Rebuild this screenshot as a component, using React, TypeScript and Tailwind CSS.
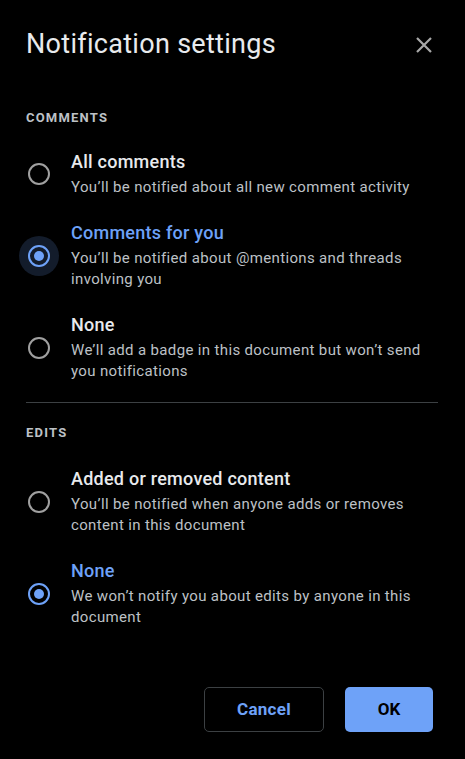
import React from "react";

type Opt = { title: string; sub: string; checked?: boolean; focus?: boolean };

function Radio({ checked, focus }: { checked?: boolean; focus?: boolean }) {
  return (
    <div className="relative w-[24px] h-[24px] shrink-0 flex items-center justify-center">
      {focus && <div className="absolute left-[-8px] top-[-8px] w-[40px] h-[40px] rounded-full bg-[#131c2b]" />}
      <div
        className={
          checked
            ? "relative w-[22px] h-[22px] rounded-full border-[2.5px] border-[#6ea2f8] flex items-center justify-center"
            : "relative w-[22px] h-[22px] rounded-full border-[2.5px] border-[#a0a0a0]"
        }
      >
        {checked && <div className="w-[10px] h-[10px] rounded-full bg-[#6ea2f8]" />}
      </div>
    </div>
  );
}

function Option({ o }: { o: Opt }) {
  return (
    <div className="flex items-center">
      <div className="w-[45px] shrink-0 pl-[1px] flex">
        <Radio checked={o.checked} focus={o.focus} />
      </div>
      <div className="flex flex-col min-w-0">
        <div
          className={
            o.checked
              ? "text-[18px] leading-[24px] font-medium tracking-[0.25px] text-[#6ea2f8]"
              : "text-[18px] leading-[24px] font-medium tracking-[0.25px] text-[#e8eaed]"
          }
        >
          {o.title}
        </div>
        <div className="mt-[3px] text-[15px] leading-[21px] tracking-[0.35px] text-[#bdc1c6] pr-[14px]">{o.sub}</div>
      </div>
    </div>
  );
}

export default function App() {
  const comments: Opt[] = [
    { title: "All comments", sub: "You’ll be notified about all new comment activity" },
    { title: "Comments for you", sub: "You’ll be notified about @mentions and threads involving you", checked: true, focus: true },
    { title: "None", sub: "We’ll add a badge in this document but won’t send you notifications" },
  ];
  const edits: Opt[] = [
    { title: "Added or removed content", sub: "You’ll be notified when anyone adds or removes content in this document" },
    { title: "None", sub: "We won’t notify you about edits by anyone in this document", checked: true },
  ];
  return (
    <div
      className="w-[465px] h-[759px] bg-black text-[#e8eaed] overflow-hidden"
      style={{ fontFamily: "Roboto, 'Liberation Sans', sans-serif" }}
    >
      <div className="pt-[28px] pl-[26px] pr-[27px] flex flex-col">
        <div className="flex items-center justify-between h-[32px]">
          <div className="text-[27px] leading-[32px] tracking-[0.3px] text-[#e8eaed]">Notification settings</div>
          <svg width="18" height="18" viewBox="0 0 18 18" className="mr-[5px] mt-[1px]">
            <path d="M2 2 L16 16 M16 2 L2 16" stroke="#a8a8a8" strokeWidth="2.2" strokeLinecap="butt" />
          </svg>
        </div>

        <div className="mt-[50px] text-[13px] leading-[16px] font-bold tracking-[1.2px] text-[#bdc1c6]">COMMENTS</div>
        <div className="mt-[24px] flex flex-col gap-[23px]">
          {comments.map((o, i) => (
            <Option key={i} o={o} />
          ))}
        </div>

        <div className="mt-[20px] h-px bg-[#3c4043]" />

        <div className="mt-[22px] text-[13px] leading-[16px] font-bold tracking-[1.2px] text-[#bdc1c6]">EDITS</div>
        <div className="mt-[26px] flex flex-col gap-[23px]">
          {edits.map((o, i) => (
            <Option key={i} o={o} />
          ))}
        </div>

        <div className="mt-[59px] flex justify-end gap-[21px] pr-[5px]">
          <button className="w-[120px] h-[45px] rounded-[5px] border border-[#3c4043] text-[#6ea2f8] text-[17px] font-bold tracking-[0.3px]">
            Cancel
          </button>
          <button className="w-[88px] h-[45px] rounded-[5px] bg-[#6ea2f8] text-black text-[17px] font-bold">OK</button>
        </div>
      </div>
    </div>
  );
}
